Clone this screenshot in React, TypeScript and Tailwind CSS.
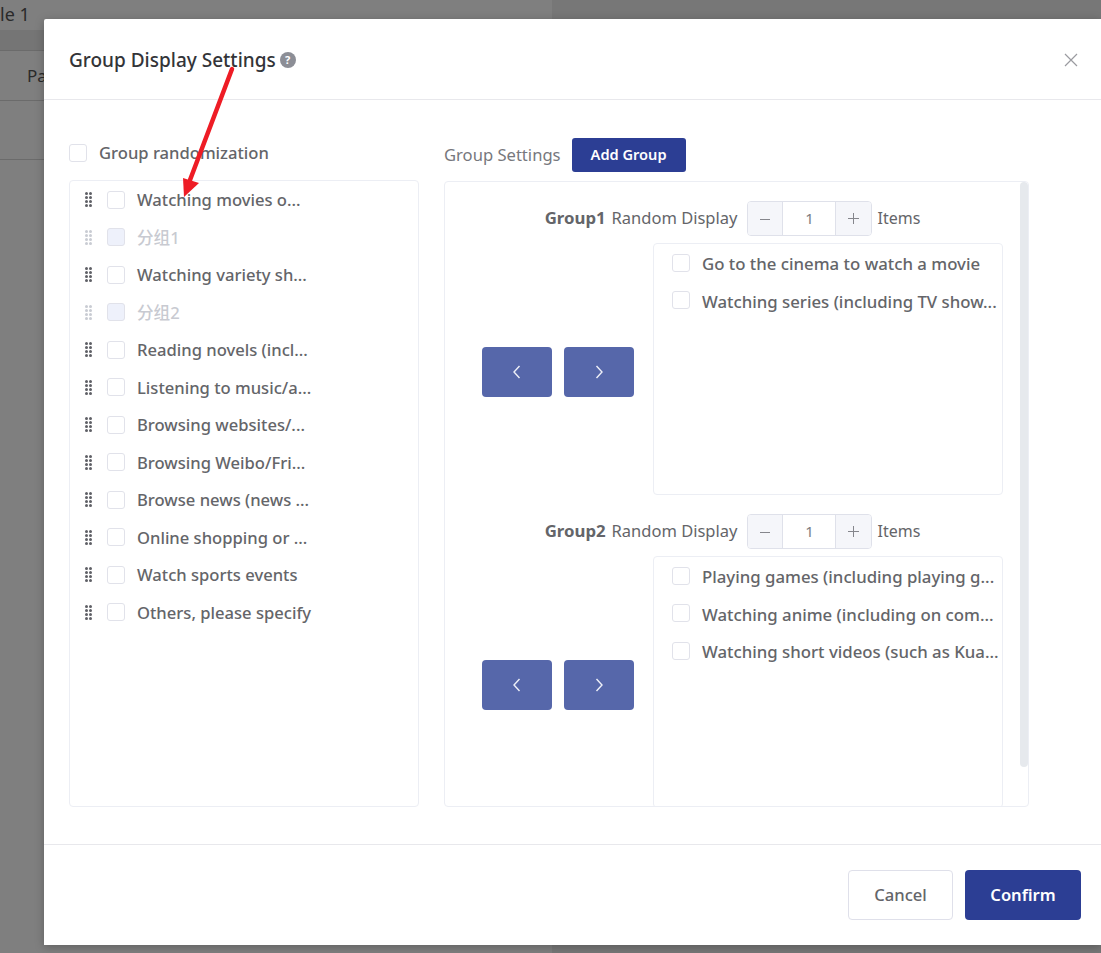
import React from "react";

const font = { fontFamily: '"Noto Sans","Noto Sans CJK SC",sans-serif' };

function Drag({ light }: { light?: boolean }) {
  const c = light ? "#c9ccd3" : "#5f6066";
  const dots = [];
  for (const x of [1.5, 5.5]) for (const y of [1.5, 5.5, 9.5, 13.5]) dots.push(<circle key={x + "-" + y} cx={x} cy={y} r={1.5} fill={c} />);
  return <svg width="7" height="15" viewBox="0 0 7 15" className="shrink-0">{dots}</svg>;
}

function Box({ disabled, className = "" }: { disabled?: boolean; className?: string }) {
  return <span className={`block w-[18px] h-[18px] shrink-0 rounded-[3px] border border-[#e1e2ea] ${disabled ? "bg-[#eef1fb]" : "bg-white"} ${className}`} />;
}

function LeftRow({ label, disabled }: { label: string; disabled?: boolean }) {
  return (
    <div className="h-[37.5px] flex items-center pl-[15px]">
      <Drag light={disabled} />
      <Box disabled={disabled} className="ml-[15px]" />
      <span className={`ml-[12px] pt-[2px] text-[16.6px] font-medium whitespace-nowrap ${disabled ? "text-[#c8cad1]" : "text-[#646569]"}`}>{label}</span>
    </div>
  );
}

function Chevron({ dir }: { dir: "l" | "r" }) {
  return (
    <svg width="10" height="14" viewBox="0 0 10 14" fill="none" stroke="#eef0f8" strokeWidth="1.4">
      <path d={dir === "l" ? "M7.5 1 L2 7 L7.5 13" : "M2.5 1 L8 7 L2.5 13"} />
    </svg>
  );
}

function Group({ name, items }: { name: string; items: string[] }) {
  return (
    <div className="shrink-0 mb-[19px]">
      <div className="h-[35px] flex items-center justify-center text-[16.5px] text-[#646569]">
        <span className="font-bold text-[16.8px] mb-[1px]">{name}</span>
        <span className="ml-[6px] mb-[1px]">Random Display</span>
        <div className="ml-[10px] flex h-[35px] w-[125px] rounded-[4px] border border-[#dfe1ea] overflow-hidden text-[#7b7c82]">
          <span className="w-[35px] bg-[#f5f6fa] border-r border-[#dfe1ea] flex items-center justify-center">
            <svg width="10" height="10" viewBox="0 0 10 10" stroke="#85868c" strokeWidth="1"><path d="M0 5.5 H10" /></svg>
          </span>
          <span className="flex-1 flex items-center justify-center text-[15px]">1</span>
          <span className="w-[36px] bg-[#f5f6fa] border-l border-[#dfe1ea] flex items-center justify-center">
            <svg width="11" height="11" viewBox="0 0 11 11" stroke="#85868c" strokeWidth="1"><path d="M0 5.5 H11 M5.5 0 V11" /></svg>
          </span>
        </div>
        <span className="ml-[5px] mb-[1px] text-[16px]">Items</span>
      </div>
      <div className="mt-[7px] flex">
        <div className="w-[208px] pl-[37px] pt-[6px] flex items-center gap-[12px] shrink-0">
          <button className="w-[70px] h-[50px] rounded-[4px] bg-[#5667aa] flex items-center justify-center"><Chevron dir="l" /></button>
          <button className="w-[70px] h-[50px] rounded-[4px] bg-[#5667aa] flex items-center justify-center"><Chevron dir="r" /></button>
        </div>
        <div className="w-[350px] h-[252px] rounded-[4px] border border-[#eceef4] overflow-hidden">
          {items.map((t) => (
            <div key={t} className="h-[37.5px] flex items-center pl-[18px]">
              <Box />
              <span className="ml-[12px] pt-[2px] text-[16.8px] font-medium text-[#646569] whitespace-nowrap">{t}</span>
            </div>
          ))}
        </div>
      </div>
    </div>
  );
}

export default function App() {
  return (
    <div className="relative w-[1101px] h-[953px] overflow-hidden bg-[#777777]" style={font}>
      {/* page behind the dialog */}
      <div className="w-[552px] h-[953px] bg-[#7f7f7f] text-[#2a2a2a]">
        <div className="h-[30px] flex items-center text-[18px] pb-[2px]">le 1</div>
        <div className="h-[21px] bg-[#757575] border-b border-[#6b6b6b]" />
        <div className="h-[50px] border-b border-[#6b6b6b] flex items-center pl-[27px] text-[17px]">Pa</div>
        <div className="h-[59px] border-b border-[#6b6b6b]" />
      </div>

      {/* dialog */}
      <div className="absolute left-[44px] top-[19px] w-[1057px] h-[926px] bg-white flex flex-col shadow-[0_2px_10px_rgba(0,0,0,0.25)] rounded-tl-[2px]">
        <div className="h-[81px] shrink-0 border-b border-[#e8e8ec] flex items-center pl-[25px] pr-[23px]">
          <span className="text-[19px] font-medium text-[#333438] mt-[2px]">Group Display Settings</span>
          <span className="ml-[4px] mt-[2px] w-[16px] h-[16px] rounded-full bg-[#8c8e96] text-white text-[11px] font-bold flex items-center justify-center">?</span>
          <svg className="ml-auto mt-[2px]" width="14" height="14" viewBox="0 0 14 14" stroke="#9a9ba0" strokeWidth="1.2"><path d="M1 1 L13 13 M13 1 L1 13" /></svg>
        </div>

        <div className="flex-1 min-h-0 flex pl-[25px] pt-[38px]">
          <div className="w-[350px] shrink-0">
            <div className="h-[30px] flex items-center">
              <Box />
              <span className="ml-[12px] text-[16.6px] font-medium text-[#646569]">Group randomization</span>
            </div>
            <div className="mt-[12px] h-[627px] rounded-[4px] border border-[#eceef4]">
              <LeftRow label="Watching movies o..." />
              <LeftRow label="分组1" disabled />
              <LeftRow label="Watching variety sh..." />
              <LeftRow label="分组2" disabled />
              <LeftRow label="Reading novels (incl..." />
              <LeftRow label="Listening to music/a..." />
              <LeftRow label="Browsing websites/..." />
              <LeftRow label="Browsing Weibo/Fri..." />
              <LeftRow label="Browse news (news ..." />
              <LeftRow label="Online shopping or ..." />
              <LeftRow label="Watch sports events" />
              <LeftRow label="Others, please specify" />
            </div>
          </div>

          <div className="w-[585px] ml-[25px] shrink-0">
            <div className="h-[34px] flex items-center">
              <span className="text-[16.6px] text-[#77787d]">Group Settings</span>
              <button className="ml-[11px] w-[114px] h-[34px] rounded-[3px] bg-[#2c3e94] text-white text-[14.6px] font-semibold">Add Group</button>
            </div>
            <div className="relative mt-[9px] h-[626px] rounded-[4px] border border-[#eceef4] overflow-hidden pt-[19px] pr-[8px] flex flex-col">
              <Group name="Group1" items={["Go to the cinema to watch a movie", "Watching series (including TV show..."]} />
              <Group name="Group2" items={["Playing games (including playing g...", "Watching anime (including on com...", "Watching short videos (such as Kua..."]} />
              <div className="absolute right-0 top-0 w-[8px] h-[585px] rounded-[4px] bg-[#e6e9ed]" />
            </div>
          </div>
        </div>

        <div className="h-[101px] shrink-0 border-t border-[#e8e8ec] flex items-start justify-end pt-[25px] pr-[20px] gap-[12px]">
          <button className="w-[105px] h-[50px] rounded-[4px] border border-[#dfe0ea] bg-white text-[16.6px] font-medium text-[#646569]">Cancel</button>
          <button className="w-[116px] h-[50px] rounded-[4px] bg-[#2c3e94] text-white text-[16.6px] font-semibold">Confirm</button>
        </div>
      </div>

      {/* annotation arrow */}
      <svg className="absolute left-0 top-0 pointer-events-none" width="1101" height="953" fill="none">
        <path d="M232 69 L190 180" stroke="#ee1c25" strokeWidth="4.5" strokeLinecap="round" />
        <path d="M184 197 L183 178 L199 183 Z" fill="#ee1c25" />
      </svg>
    </div>
  );
}
